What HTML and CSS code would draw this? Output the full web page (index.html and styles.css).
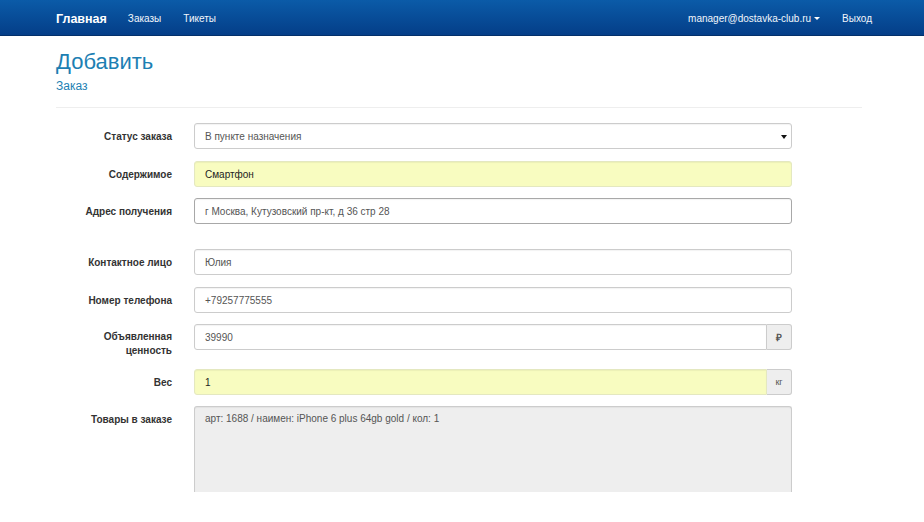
FILE: index.html
```html
<!DOCTYPE html>
<html lang="ru">
<head>
<meta charset="utf-8">
<title>Добавить заказ</title>
<link rel="stylesheet" href="styles.css">
</head>
<body>
<nav class="navbar">
  <div class="nav-inner">
    <div class="nav-left">
      <a class="brand" href="#">Главная</a>
      <a class="nav-link" href="#">Заказы</a>
      <a class="nav-link" href="#">Тикеты</a>
    </div>
    <div class="nav-right">
      <a class="nav-link user" href="#">manager@dostavka-club.ru<span class="caret"></span></a>
      <a class="nav-link" href="#">Выход</a>
    </div>
  </div>
</nav>
<main class="container">
  <header class="page-header">
    <h1 class="title">Добавить</h1>
    <div class="subtitle">Заказ</div>
  </header>
  <form class="form">
    <div class="row r12">
      <label class="label">Статус заказа</label>
      <div class="control select">В пункте назначения<span class="sel-caret"></span></div>
    </div>
    <div class="row r11">
      <label class="label">Содержимое</label>
      <div class="control yellow dark">Смартфон</div>
    </div>
    <div class="row r25">
      <label class="label">Адрес получения</label>
      <div class="control strong">г Москва, Кутузовский пр-кт, д 36 стр 28</div>
    </div>
    <div class="row r12">
      <label class="label">Контактное лицо</label>
      <div class="control">Юлия</div>
    </div>
    <div class="row r11">
      <label class="label">Номер телефона</label>
      <div class="control">+79257775555</div>
    </div>
    <div class="row r11">
      <label class="label two">Объявленная<br>ценность</label>
      <div class="group">
        <div class="control grouped">39990</div>
        <span class="addon rub">₽</span>
      </div>
    </div>
    <div class="row r11">
      <label class="label">Вес</label>
      <div class="group">
        <div class="control grouped yellow dark">1</div>
        <span class="addon">кг</span>
      </div>
    </div>
    <div class="row">
      <label class="label">Товары в заказе</label>
      <div class="control area">арт: 1688 / наимен: iPhone 6 plus 64gb gold / кол: 1</div>
    </div>
  </form>
</main>
</body>
</html>
```
FILE: styles.css
```css
* { box-sizing: border-box; }
html, body { margin: 0; padding: 0; background: #fff; }
body {
  font-family: "Liberation Sans", Arial, sans-serif;
  color: #333;
  font-size: 10px;
  overflow: hidden;
}
a { text-decoration: none; }

.navbar {
  height: 36px;
  background: linear-gradient(#0b5ba8, #043e88);
  border-bottom: 1px solid #03306a;
}
.nav-inner {
  height: 100%;
  display: flex;
  justify-content: space-between;
  align-items: center;
  padding: 2px 52px 0 56px;
}
.nav-left, .nav-right { display: flex; align-items: center; }
.brand {
  color: #fff;
  font-weight: bold;
  font-size: 12.5px;
  margin-right: 21px;
}
.nav-link {
  color: #f2f6fb;
  font-size: 10px;
  margin-right: 22px;
}
.nav-right .nav-link:last-child { margin-right: 0; }
.user { margin-right: 22px; display: inline-flex; align-items: center; }
.caret {
  display: inline-block;
  margin-left: 3px;
  border-left: 3px solid transparent;
  border-right: 3px solid transparent;
  border-top: 3px solid #fff;
}

.container {
  width: 806px;
  margin-left: 56px;
}
.page-header {
  padding-top: 14px;
  border-bottom: 1px solid #eee;
  height: 72px;
  margin-bottom: 15px;
}
.title {
  margin: 0;
  font-weight: normal;
  font-size: 22px;
  line-height: 24px;
  color: #1d7fb3;
}
.subtitle {
  margin-top: 5px;
  font-size: 12px;
  color: #1d7fb3;
}

.form { display: flex; flex-direction: column; }
.row {
  display: flex;
  align-items: flex-start;
}
.r11 { margin-bottom: 11px; }
.r12 { margin-bottom: 12px; }
.r25 { margin-bottom: 25px; }
.label {
  width: 116px;
  margin-right: 22px;
  text-align: right;
  font-weight: bold;
  font-size: 10px;
  color: #333;
  padding-top: 7px;
  line-height: 14px;
}
.label.two { padding-top: 6px; }
.control {
  width: 598px;
  height: 26px;
  border: 1px solid #ccc;
  border-radius: 3px;
  padding: 0 10px;
  display: flex;
  align-items: center;
  color: #555;
  font-size: 10px;
  background: #fff;
  box-shadow: inset 0 1px 1px rgba(0,0,0,.05);
}
.select { position: relative; }
.sel-caret {
  position: absolute;
  right: 4px;
  top: 11px;
  border-left: 3px solid transparent;
  border-right: 3px solid transparent;
  border-top: 4px solid #111;
}
.yellow { background: #f8fcc0; border-color: #e4e8c0; }
.dark { color: #222; }
.strong { border-color: #a8a8a8; }

.group { display: flex; width: 598px; flex: none; }
.group .grouped {
  width: 573px;
  flex: none;
  border-top-right-radius: 0;
  border-bottom-right-radius: 0;
}
.addon {
  width: 25px;
  flex: none;
  height: 26px;
  background: #eee;
  border: 1px solid #ccc;
  border-left: 0;
  border-radius: 0 3px 3px 0;
  display: flex;
  align-items: center;
  justify-content: center;
  color: #555;
  font-size: 9px;
}
.rub { font-weight: bold; font-size: 10px; }

.area {
  height: 86px;
  align-items: flex-start;
  padding-top: 6px;
  background: #eee;
  border-bottom: 0;
  border-radius: 3px 3px 0 0;
}
```
